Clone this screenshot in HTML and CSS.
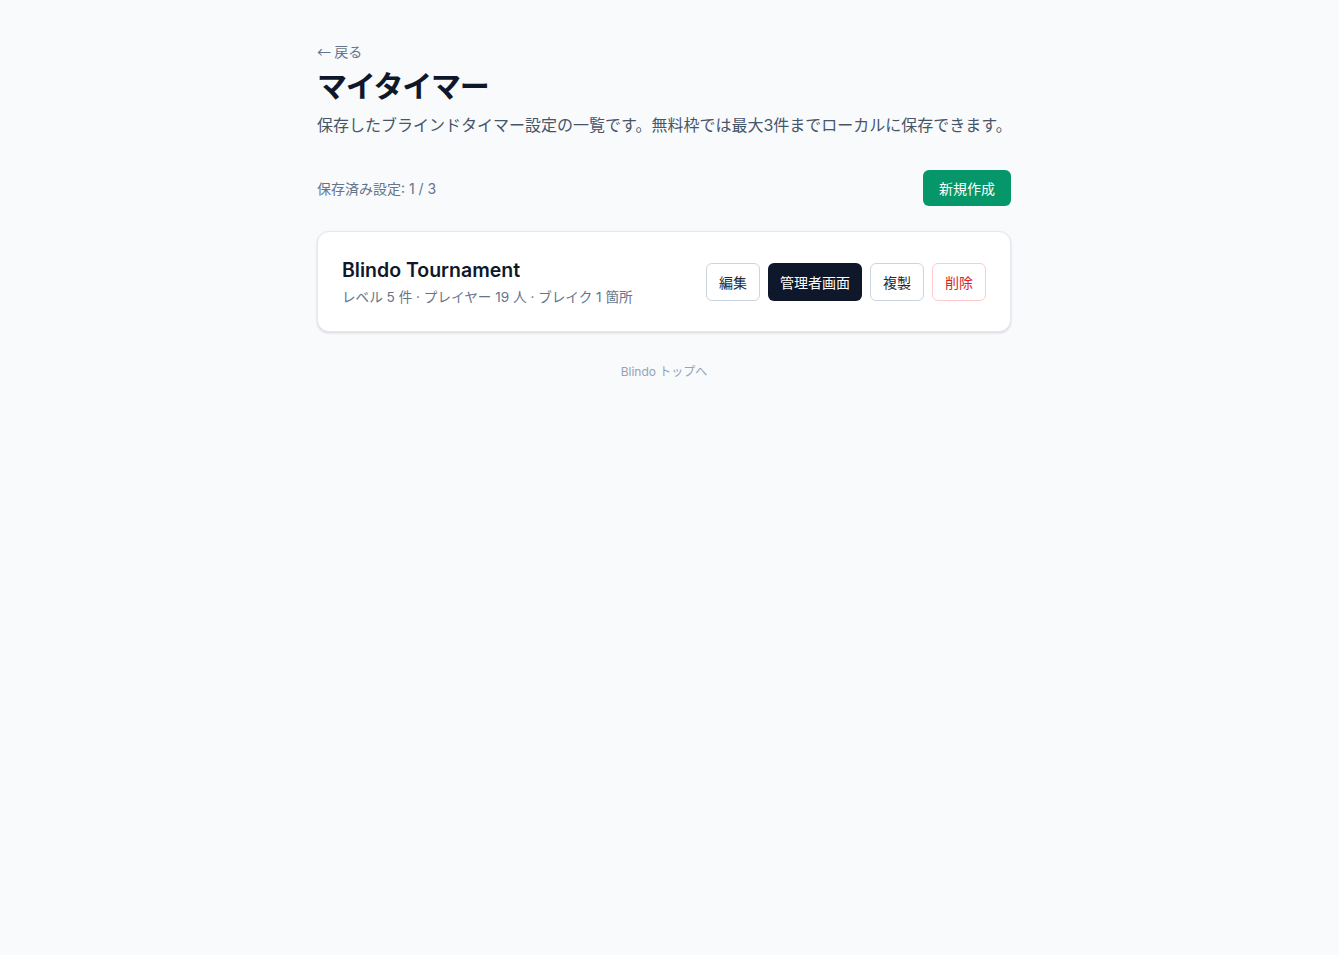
FILE: index.html
```html
<!DOCTYPE html>
<html lang="ja">
<head>
<meta charset="utf-8">
<title>マイタイマー</title>
<link rel="stylesheet" href="styles.css">
</head>
<body>
<main class="page">
  <a class="back" href="#">← 戻る</a>
  <h1 class="title">マイタイマー</h1>
  <p class="lead">保存したブラインドタイマー設定の一覧です。無料枠では最大3件までローカルに保存できます。</p>
  <div class="toolbar">
    <span class="count">保存済み設定: 1 / 3</span>
    <button class="btn-new">新規作成</button>
  </div>
  <section class="card">
    <div class="card-info">
      <h2 class="card-title">Blindo Tournament</h2>
      <p class="card-meta">レベル 5 件 · プレイヤー 19 人 · ブレイク 1 箇所</p>
    </div>
    <div class="actions">
      <button class="btn btn-outline">編集</button>
      <button class="btn btn-dark">管理者画面</button>
      <button class="btn btn-outline">複製</button>
      <button class="btn btn-danger">削除</button>
    </div>
  </section>
  <footer class="foot"><a href="#">Blindo トップへ</a></footer>
</main>
</body>
</html>
```
FILE: styles.css
```css
* { box-sizing: border-box; }
html, body { margin: 0; padding: 0; }
body {
  background: #f8fafc;
  font-family: Inter, "Noto Sans CJK JP", sans-serif;
  color: #0f172a;
  padding-right: 11px;
}
.page {
  max-width: 694px;
  margin: 0 auto;
  padding-top: 41px;
}
.back {
  display: block;
  font-family: "Noto Sans CJK JP", sans-serif;
  font-size: 14px;
  line-height: 20px;
  color: #64748b;
  text-decoration: none;
}
.title {
  margin: 7px 0 0;
  font-size: 30px;
  line-height: 36px;
  font-weight: 700;
  letter-spacing: -0.04em;
  color: #0f172a;
}
.lead {
  margin: 9px 0 0;
  font-size: 16px;
  line-height: 24px;
  letter-spacing: 0;
  white-space: nowrap;
  color: #475569;
}
.toolbar {
  margin-top: 33px;
  display: flex;
  justify-content: space-between;
  align-items: center;
}
.count {
  font-size: 14px;
  color: #64748b;
}
.btn-new {
  height: 36px;
  padding: 0 16px;
  border: none;
  border-radius: 6px;
  background: #059669;
  color: #fff;
  font-family: inherit;
  font-size: 14px;
}
.card {
  margin-top: 25px;
  height: 101px;
  background: #fff;
  border: 1px solid #e2e8f0;
  border-radius: 12px;
  box-shadow: 0 1px 3px rgba(15, 23, 42, 0.1), 0 1px 2px rgba(15, 23, 42, 0.06);
  padding: 0 24px;
  display: flex;
  align-items: center;
  justify-content: space-between;
}
.card-title {
  margin: 0;
  font-size: 19.5px;
  line-height: 28px;
  font-weight: 600;
  color: #0f172a;
}
.card-meta {
  margin: 3px 0 0;
  font-size: 13.6px;
  line-height: 21px;
  color: #64748b;
}
.actions {
  display: flex;
  gap: 8px;
}
.btn {
  height: 38px;
  padding: 0 12px;
  border-radius: 6px;
  font-family: inherit;
  font-size: 14px;
  background: #fff;
  border: 1px solid #cbd5e1;
  color: #1e293b;
}
.btn-dark {
  background: #0f172a;
  border: none;
  color: #fff;
}
.btn-danger {
  border-color: #fecaca;
  color: #dc2626;
}
.foot {
  margin-top: 32px;
  text-align: center;
  font-size: 12px;
  line-height: 16px;
}
.foot a {
  color: #94a3b8;
  text-decoration: none;
}
```
